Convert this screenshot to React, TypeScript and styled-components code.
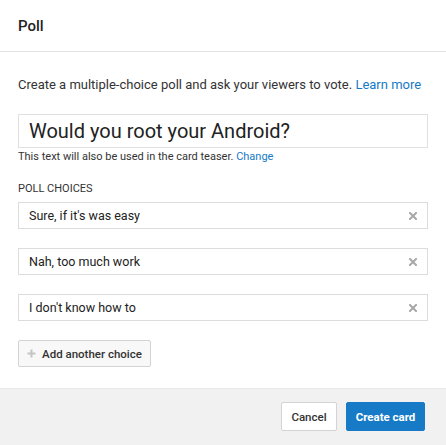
import React from "react";
import styled, { createGlobalStyle } from "styled-components";

const Global = createGlobalStyle`
  html, body { margin: 0; padding: 0; background: #fff; }
  body { font-family: Roboto, "Helvetica Neue", Arial, sans-serif; color: #222; }
  * { box-sizing: border-box; }
`;

const Dialog = styled.div`
  width: 446px;
  height: 445px;
  display: flex;
  flex-direction: column;
  background: #fff;
`;

const Header = styled.div`
  height: 52px;
  padding: 0 18px;
  display: flex;
  align-items: center;
  border-bottom: 1px solid #e3e3e3;
  font-size: 15px;
  font-weight: 500;
  color: #222;
`;

const Body = styled.div`
  flex: 1;
  padding: 25px 18px 0 18px;
  display: flex;
  flex-direction: column;
`;

const Description = styled.p`
  margin: 0;
  font-size: 13px;
  line-height: 16px;
  color: #333;
`;

const Link = styled.a`
  color: #167ac6;
  text-decoration: none;
  cursor: pointer;
`;

const TitleField = styled.div`
  margin-top: 21px;
  height: 34px;
  border: 1px solid #e0e0e0;
  padding: 0 10px;
  display: flex;
  align-items: center;
  font-size: 20px;
  color: #222;
`;

const Helper = styled.div`
  margin-top: 2px;
  font-size: 11px;
  line-height: 14px;
  color: #333;
`;

const SectionLabel = styled.div`
  margin-top: 18px;
  font-size: 11px;
  line-height: 14px;
  color: #333;
  text-transform: uppercase;
`;

const Choices = styled.div`
  margin-top: 6px;
  display: flex;
  flex-direction: column;
  gap: 19px;
`;

const ChoiceRow = styled.div`
  height: 27px;
  border: 1px solid #dcdcdc;
  padding: 0 10px;
  display: flex;
  align-items: center;
  justify-content: space-between;
  font-size: 12.5px;
  color: #222;
`;

const RemoveIcon = styled.svg`
  width: 8px;
  height: 8px;
`;

const AddButton = styled.button`
  margin-top: 19px;
  align-self: flex-start;
  height: 27px;
  width: 133px;
  border: 1px solid #d3d3d3;
  background: #f8f8f8;
  border-radius: 2px;
  display: flex;
  align-items: center;
  justify-content: center;
  gap: 6px;
  padding: 0;
  white-space: nowrap;
  font-family: inherit;
  font-size: 11.5px;
  font-weight: 500;
  color: #333;
`;

const Footer = styled.div`
  height: 57px;
  background: #f1f1f1;
  border-top: 1px solid #e8e8e8;
  display: flex;
  justify-content: flex-end;
  align-items: flex-start;
  padding: 13px 21px 0 0;
  gap: 9px;
`;

const Button = styled.button<{ $primary?: boolean }>`
  height: 29px;
  padding: 0;
  border-radius: 2px;
  white-space: nowrap;
  font-family: inherit;
  font-size: 11.5px;
  font-weight: ${(p) => (p.$primary ? 700 : 500)};
  border: 1px solid ${(p) => (p.$primary ? "#167ac6" : "#d3d3d3")};
  background: ${(p) => (p.$primary ? "#167ac6" : "#fff")};
  color: ${(p) => (p.$primary ? "#fff" : "#333")};
  width: ${(p) => (p.$primary ? "79px" : "56px")};
`;

const choices = ["Sure, if it's was easy", "Nah, too much work", "I don't know how to"];

export default function App() {
  return (
    <>
      <Global />
      <Dialog>
        <Header>Poll</Header>
        <Body>
          <Description>
            Create a multiple-choice poll and ask your viewers to vote. <Link>Learn more</Link>
          </Description>
          <TitleField>Would you root your Android?</TitleField>
          <Helper>
            This text will also be used in the card teaser. <Link>Change</Link>
          </Helper>
          <SectionLabel>Poll choices</SectionLabel>
          <Choices>
            {choices.map((c) => (
              <ChoiceRow key={c}>
                <span>{c}</span>
                <RemoveIcon viewBox="0 0 8 8">
                  <path d="M1 1 L7 7 M7 1 L1 7" stroke="#a8a8a8" strokeWidth="2" strokeLinecap="square" />
                </RemoveIcon>
              </ChoiceRow>
            ))}
          </Choices>
          <AddButton>
            <svg width="9" height="9" viewBox="0 0 9 9">
              <path d="M4.5 0.5 V8.5 M0.5 4.5 H8.5" stroke="#c4c4c4" strokeWidth="2" />
            </svg>
            Add another choice
          </AddButton>
        </Body>
        <Footer>
          <Button>Cancel</Button>
          <Button $primary>Create card</Button>
        </Footer>
      </Dialog>
    </>
  );
}
